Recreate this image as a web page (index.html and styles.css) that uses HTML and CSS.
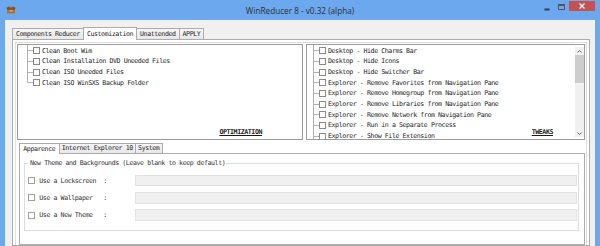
FILE: index.html
```html
<!DOCTYPE html>
<html lang="en">
<head>
    <meta charset="UTF-8">
    <title>WinReducer 8 - v0.32 (alpha)</title>
<link rel="stylesheet" href="styles.css">
</head>
<body>

<div class="window">
    <div class="titlebar">
        <svg class="appicon" width="10" height="8" viewBox="0 0 10 8">
            <path d="M1 3 L5 1.5 L9 3 L9 7.5 L1 7.5 Z" fill="#b0702e"/>
            <path d="M0 2 L3 0.5 L5 1.5 L2 3 Z" fill="#8a5522"/>
            <path d="M10 2 L7 0.5 L5 1.5 L8 3 Z" fill="#8a5522"/>
            <path d="M1 3 L9 3" stroke="#5e3814" stroke-width="0.8"/>
            <rect x="3.5" y="4.2" width="3" height="1.3" fill="#e2b47a"/>
        </svg>
        <span class="title">WinReducer 8 - v0.32 (alpha)</span>
        <div class="controls">
            <span class="ctl">
                <svg width="6" height="3" viewBox="0 0 6 3"><rect x="0.5" y="0.5" width="5" height="2" fill="#3a3a3a"/></svg>
            </span>
            <span class="ctl max">
                <svg width="7" height="6" viewBox="0 0 7 6"><rect x="0.5" y="0.5" width="6" height="5" fill="none" stroke="#555" stroke-width="1"/><rect x="0.5" y="0.5" width="6" height="1.5" fill="#555"/></svg>
            </span>
            <span class="ctl close">
                <svg width="6" height="6" viewBox="0 0 6 6"><path d="M0.5 0.5 L5.5 5.5 M5.5 0.5 L0.5 5.5" stroke="#fff" stroke-width="1.3"/></svg>
            </span>
        </div>
    </div>

    <div class="client">
        <div class="tabs">
            <span class="tab">Components Reducer</span>
            <span class="tab active">Customization</span>
            <span class="tab">Unattended</span>
            <span class="tab">APPLY</span>
        </div>

        <div class="page">
            <div class="inner">
                <div class="panels">
                    <div class="panel left">
                        <ul class="tree">
                            <li><span class="cb"></span>Clean Boot Wim</li>
                            <li><span class="cb"></span>Clean Installation DVD Uneeded Files</li>
                            <li><span class="cb"></span>Clean ISO Uneeded Files</li>
                            <li><span class="cb"></span>Clean ISO WinSXS Backup Folder</li>
                        </ul>
                        <a class="link">OPTIMIZATION</a>
                    </div>
                    <div class="panel right">
                        <ul class="tree open">
                            <li><span class="cb"></span>Desktop - Hide Charms Bar</li>
                            <li><span class="cb"></span>Desktop - Hide Icons</li>
                            <li><span class="cb"></span>Desktop - Hide Switcher Bar</li>
                            <li><span class="cb"></span>Explorer - Remove Favorites from Navigation Pane</li>
                            <li><span class="cb"></span>Explorer - Remove Homegroup from Navigation Pane</li>
                            <li><span class="cb"></span>Explorer - Remove Libraries from Navigation Pane</li>
                            <li><span class="cb"></span>Explorer - Remove Network from Navigation Pane</li>
                            <li><span class="cb"></span>Explorer - Run in a Separate Process</li>
                            <li><span class="cb"></span>Explorer - Show File Extension</li>
                        </ul>
                        <div class="scroll">
                            <span class="arrow">
                                <svg width="5" height="3" viewBox="0 0 5 3"><path d="M0.5 2.5 L2.5 0.5 L4.5 2.5" fill="none" stroke="#606060" stroke-width="1"/></svg>
                            </span>
                            <span class="thumb"></span>
                            <span class="track"></span>
                            <span class="arrow">
                                <svg width="5" height="3" viewBox="0 0 5 3"><path d="M0.5 0.5 L2.5 2.5 L4.5 0.5" fill="none" stroke="#606060" stroke-width="1"/></svg>
                            </span>
                        </div>
                        <a class="link">TWEAKS</a>
                    </div>
                </div>

                <div class="subtabs">
                    <span class="tab active">Apparence</span>
                    <span class="tab">Internet Explorer 10</span>
                    <span class="tab">System</span>
                </div>

                <div class="subpage">
                    <fieldset class="group">
                        <legend>New Theme and Backgrounds (Leave blank to keep default)</legend>
                        <div class="rows">
                            <div class="row"><span class="cb"></span><span class="lbl">Use a Lockscreen  :</span><span class="field"></span></div>
                            <div class="row"><span class="cb"></span><span class="lbl">Use a Wallpaper   :</span><span class="field"></span></div>
                            <div class="row"><span class="cb"></span><span class="lbl">Use a New Theme   :</span><span class="field"></span></div>
                        </div>
                    </fieldset>
                </div>
            </div>
        </div>
    </div>
</div>

</body>
</html>
```

FILE: styles.css
```css
* {
    box-sizing: border-box;
}
html, body {
    margin: 0;
    height: 100%;
}
body {
    background: #6ca8ee;
    overflow: hidden;
    font-family: "DejaVu Sans Mono", monospace;
    font-size: 6.6px;
    letter-spacing: -0.42px;
    color: #1e1e1e;
}
.window {
    display: flex;
    flex-direction: column;
    height: 246px;
    padding: 0 5px;
    background: #6ca8ee;
}

/* title bar */
.titlebar {
    height: 20px;
    display: grid;
    grid-template-columns: 1fr auto 1fr;
    align-items: center;
}
.appicon {
    margin-left: 1px;
    margin-top: -1px;
}
.title {
    font-family: "Open Sans", "Liberation Sans", sans-serif;
    font-size: 8.2px;
    letter-spacing: 0;
    color: #2f2f2f;
}
.controls {
    justify-self: end;
    align-self: start;
    display: flex;
}
.ctl {
    width: 14px;
    height: 11px;
    display: flex;
    align-items: flex-end;
    justify-content: center;
}
.ctl.max {
    align-items: flex-start;
    padding-top: 4px;
}
.ctl.close {
    width: 26px;
    height: 10px;
    margin-top: 1px;
    margin-left: 1px;
    background: #c75050;
    align-items: center;
}

/* client area */
.client {
    flex: 1;
    display: flex;
    flex-direction: column;
    background: #f0f0f0;
    padding: 8px 5px 0 7px;
}
.tabs {
    display: flex;
    align-items: flex-end;
    height: 11px;
}
.tab {
    height: 11px;
    line-height: 10px;
    padding: 0 3px;
    border: 1px solid #acacac;
    border-bottom: none;
    background: linear-gradient(#f5f5f5, #e8e8e8);
    margin-right: -1px;
    white-space: pre;
}
.tab.active {
    position: relative;
    z-index: 1;
    height: 13px;
    line-height: 12px;
    margin-bottom: -1px;
    background: #fff;
}
.page {
    flex: 1;
    border: 1px solid #acacac;
    background: #fff;
    padding: 2px 2px 0 2px;
}
.inner {
    height: 100%;
    display: flex;
    flex-direction: column;
    border: 1px solid #dcdcdc;
    border-bottom: none;
    padding: 1px 1px 0 1px;
}

/* option panels */
.panels {
    display: flex;
    gap: 3px;
    height: 96px;
}
.panel {
    position: relative;
    border: 1px solid #9c9c9c;
    background: #fff;
    overflow: hidden;
}
.panel.left {
    width: 286px;
}
.panel.right {
    flex: 1;
    display: flex;
}
.tree {
    list-style: none;
    margin: 0;
    padding: 0.5px 0 0 10px;
    background: linear-gradient(#b0b0b0, #b0b0b0) no-repeat 9px 0 / 1px calc(100% - 5.3px);
    align-self: flex-start;
}
.tree.open {
    flex: 1;
    padding-left: 7px;
    background-position: 6px 0;
    background-size: 1px 100%;
}
.tree li {
    display: flex;
    align-items: center;
    height: 10.67px;
    padding-left: 5px;
    white-space: pre;
    background: linear-gradient(#b0b0b0, #b0b0b0) no-repeat 0 50% / 5px 1px;
}
.cb {
    flex: none;
    width: 7px;
    height: 7px;
    border: 1px solid #8a8a8a;
    background: #fff;
    margin-right: 2px;
}
.link {
    position: absolute;
    bottom: 3px;
    right: 40px;
    line-height: 7px;
    font-weight: bold;
    text-decoration: underline;
    color: #1a1a1a;
}
.panel.right .link {
    right: 31px;
}
.scroll {
    flex: none;
    width: 9px;
    margin: 2px 0;
    display: flex;
    flex-direction: column;
    background: #f0f0f0;
}
.arrow {
    height: 8px;
    display: flex;
    align-items: center;
    justify-content: center;
}
.thumb {
    height: 28px;
    background: #cdcdcd;
}
.track {
    flex: 1;
}

/* sub tabs */
.subtabs {
    display: flex;
    align-items: flex-end;
    height: 10px;
    margin: 3px 0 0 2px;
}
.subtabs .tab {
    height: 10px;
    line-height: 9px;
    padding: 0 2.2px;
}
.subtabs .tab.active {
    height: 11px;
    line-height: 10px;
    padding: 0 3.3px;
}
.subpage {
    flex: 1;
    margin-left: 2px;
    border: 1px solid #acacac;
    background: #fff;
    padding: 6px 5px 0 4px;
}
.group {
    margin: 0;
    border: 1px solid #dcdcdc;
    padding: 0 1.5px 6px 3px;
    min-width: 0;
}
.group legend {
    padding: 0 1px 0 2px;
    line-height: 7px;
    white-space: pre;
    color: #333;
}
.rows {
    padding-top: 5px;
}
.row {
    display: flex;
    align-items: center;
    height: 17.3px;
}
.row .cb {
    border-color: #a0a0a0;
    margin-right: 4.3px;
}
.lbl {
    width: 95.7px;
    white-space: pre;
    color: #333;
}
.field {
    flex: 1;
    height: 11.5px;
    background: #f0f0f0;
    border: 1px solid #e2e2e2;
}
```
